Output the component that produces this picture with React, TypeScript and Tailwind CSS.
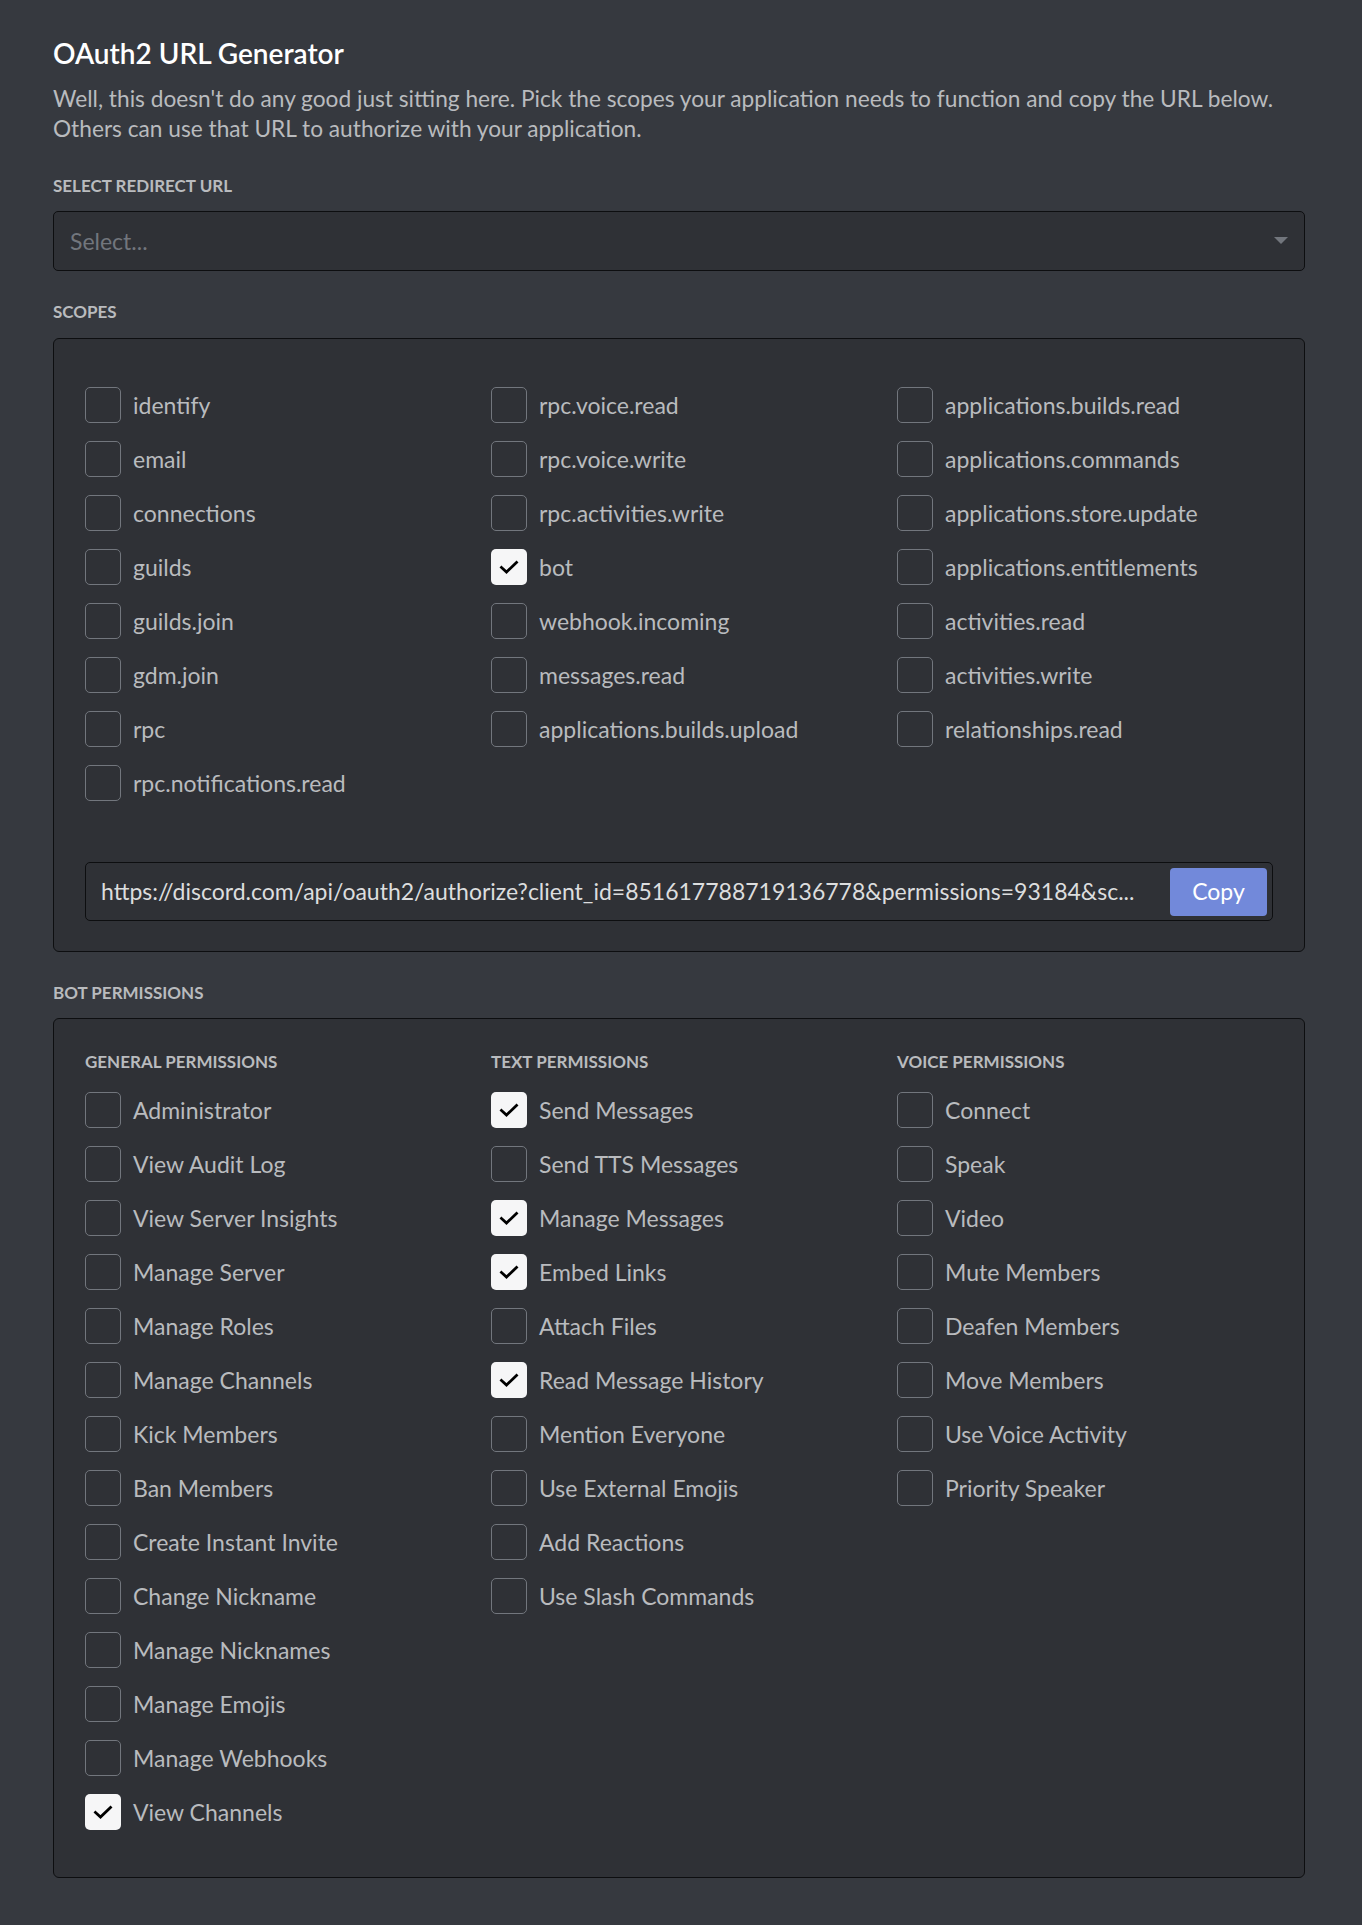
import React from 'react';

type Item = { label: string; checked?: boolean };

const scopes: Item[][] = [
  [
    { label: 'identify' },
    { label: 'email' },
    { label: 'connections' },
    { label: 'guilds' },
    { label: 'guilds.join' },
    { label: 'gdm.join' },
    { label: 'rpc' },
    { label: 'rpc.notifications.read' },
  ],
  [
    { label: 'rpc.voice.read' },
    { label: 'rpc.voice.write' },
    { label: 'rpc.activities.write' },
    { label: 'bot', checked: true },
    { label: 'webhook.incoming' },
    { label: 'messages.read' },
    { label: 'applications.builds.upload' },
  ],
  [
    { label: 'applications.builds.read' },
    { label: 'applications.commands' },
    { label: 'applications.store.update' },
    { label: 'applications.entitlements' },
    { label: 'activities.read' },
    { label: 'activities.write' },
    { label: 'relationships.read' },
  ],
];

const permissions: { title: string; items: Item[] }[] = [
  {
    title: 'General Permissions',
    items: [
      { label: 'Administrator' },
      { label: 'View Audit Log' },
      { label: 'View Server Insights' },
      { label: 'Manage Server' },
      { label: 'Manage Roles' },
      { label: 'Manage Channels' },
      { label: 'Kick Members' },
      { label: 'Ban Members' },
      { label: 'Create Instant Invite' },
      { label: 'Change Nickname' },
      { label: 'Manage Nicknames' },
      { label: 'Manage Emojis' },
      { label: 'Manage Webhooks' },
      { label: 'View Channels', checked: true },
    ],
  },
  {
    title: 'Text Permissions',
    items: [
      { label: 'Send Messages', checked: true },
      { label: 'Send TTS Messages' },
      { label: 'Manage Messages', checked: true },
      { label: 'Embed Links', checked: true },
      { label: 'Attach Files' },
      { label: 'Read Message History', checked: true },
      { label: 'Mention Everyone' },
      { label: 'Use External Emojis' },
      { label: 'Add Reactions' },
      { label: 'Use Slash Commands' },
    ],
  },
  {
    title: 'Voice Permissions',
    items: [
      { label: 'Connect' },
      { label: 'Speak' },
      { label: 'Video' },
      { label: 'Mute Members' },
      { label: 'Deafen Members' },
      { label: 'Move Members' },
      { label: 'Use Voice Activity' },
      { label: 'Priority Speaker' },
    ],
  },
];

function Checkbox({ label, checked }: Item) {
  return (
    <label className="flex items-center gap-[12px] h-[36px] cursor-pointer">
      {checked ? (
        <span className="w-[36px] h-[36px] rounded-[5px] bg-[#f6f6f7] flex items-center justify-center shrink-0">
          <svg width="20" height="15" viewBox="0 0 20 15" fill="none">
            <path d="M2.5 7.5 L7.5 12 L17.5 2.5" stroke="#000" strokeWidth="2.8" strokeLinecap="square" />
          </svg>
        </span>
      ) : (
        <span className="w-[36px] h-[36px] rounded-[5px] border border-[#72767d] shrink-0" />
      )}
      <span className="text-[23px] leading-[36px] text-[#b9bbbe] whitespace-nowrap">{label}</span>
    </label>
  );
}

function Heading({ children }: { children: React.ReactNode }) {
  return (
    <h5 className="text-[17px] leading-[24px] font-bold uppercase text-[#b9bbbe]">{children}</h5>
  );
}

export default function App() {
  return (
    <div className="min-h-[1925px] bg-[#36393f] font-['Lato','Open_Sans',sans-serif] pt-[36px] pb-[47px]">
      <div className="ml-[53px] w-[1252px]">
        <h1 className="text-[28px] leading-[34px] font-semibold text-white">OAuth2 URL Generator</h1>
        <p className="mt-[14px] text-[22.7px] leading-[30px] text-[#b9bbbe]">
          Well, this doesn't do any good just sitting here. Pick the scopes your application needs to function and copy the URL below. Others can use that URL to authorize with your application.
        </p>

        <div className="mt-[30px]">
          <Heading>Select Redirect URL</Heading>
        </div>
        <div className="mt-[13px] h-[60px] rounded-[5px] border border-[#0d0e10] bg-[#2f3136] flex items-center justify-between pl-[16px] pr-[16px]">
          <span className="text-[23px] text-[#72767d]">Select...</span>
          <svg width="14" height="8" viewBox="0 0 14 8">
            <path d="M0 0 H14 L7 7 Z" fill="#72767d" />
          </svg>
        </div>

        <div className="mt-[29px]">
          <Heading>Scopes</Heading>
        </div>
        <div className="mt-[14px] rounded-[6px] border border-[#0d0e10] bg-[#2f3136] pl-[31px] pr-[31px] pt-[48px] pb-[30px]">
          <div className="grid grid-cols-[406px_406px_1fr]">
            {scopes.map((col, i) => (
              <div key={i} className="flex flex-col gap-[18px]">
                {col.map((it) => (
                  <Checkbox key={it.label} {...it} />
                ))}
              </div>
            ))}
          </div>
          <div className="mt-[61px] h-[59px] rounded-[5px] border border-[#0d0e10] bg-[#2f3136] flex items-center pl-[15px] pr-[5px]">
            <span className="flex-1 overflow-hidden whitespace-nowrap text-[23px] text-[#dcddde]">
              https://discord.com/api/oauth2/authorize?client_id=851617788719136778&amp;permissions=93184&amp;sc...
            </span>
            <button className="w-[97px] h-[48px] rounded-[4px] bg-[#7289da] text-white text-[23px] shrink-0">Copy</button>
          </div>
        </div>

        <div className="mt-[29px]">
          <Heading>Bot Permissions</Heading>
        </div>
        <div className="mt-[13px] rounded-[6px] border border-[#0d0e10] bg-[#2f3136] pl-[31px] pr-[31px] pt-[31px] pb-[47px]">
          <div className="grid grid-cols-[406px_406px_1fr]">
            {permissions.map((group) => (
              <div key={group.title}>
                <Heading>{group.title}</Heading>
                <div className="mt-[18px] flex flex-col gap-[18px]">
                  {group.items.map((it) => (
                    <Checkbox key={it.label} {...it} />
                  ))}
                </div>
              </div>
            ))}
          </div>
        </div>
      </div>
    </div>
  );
}
